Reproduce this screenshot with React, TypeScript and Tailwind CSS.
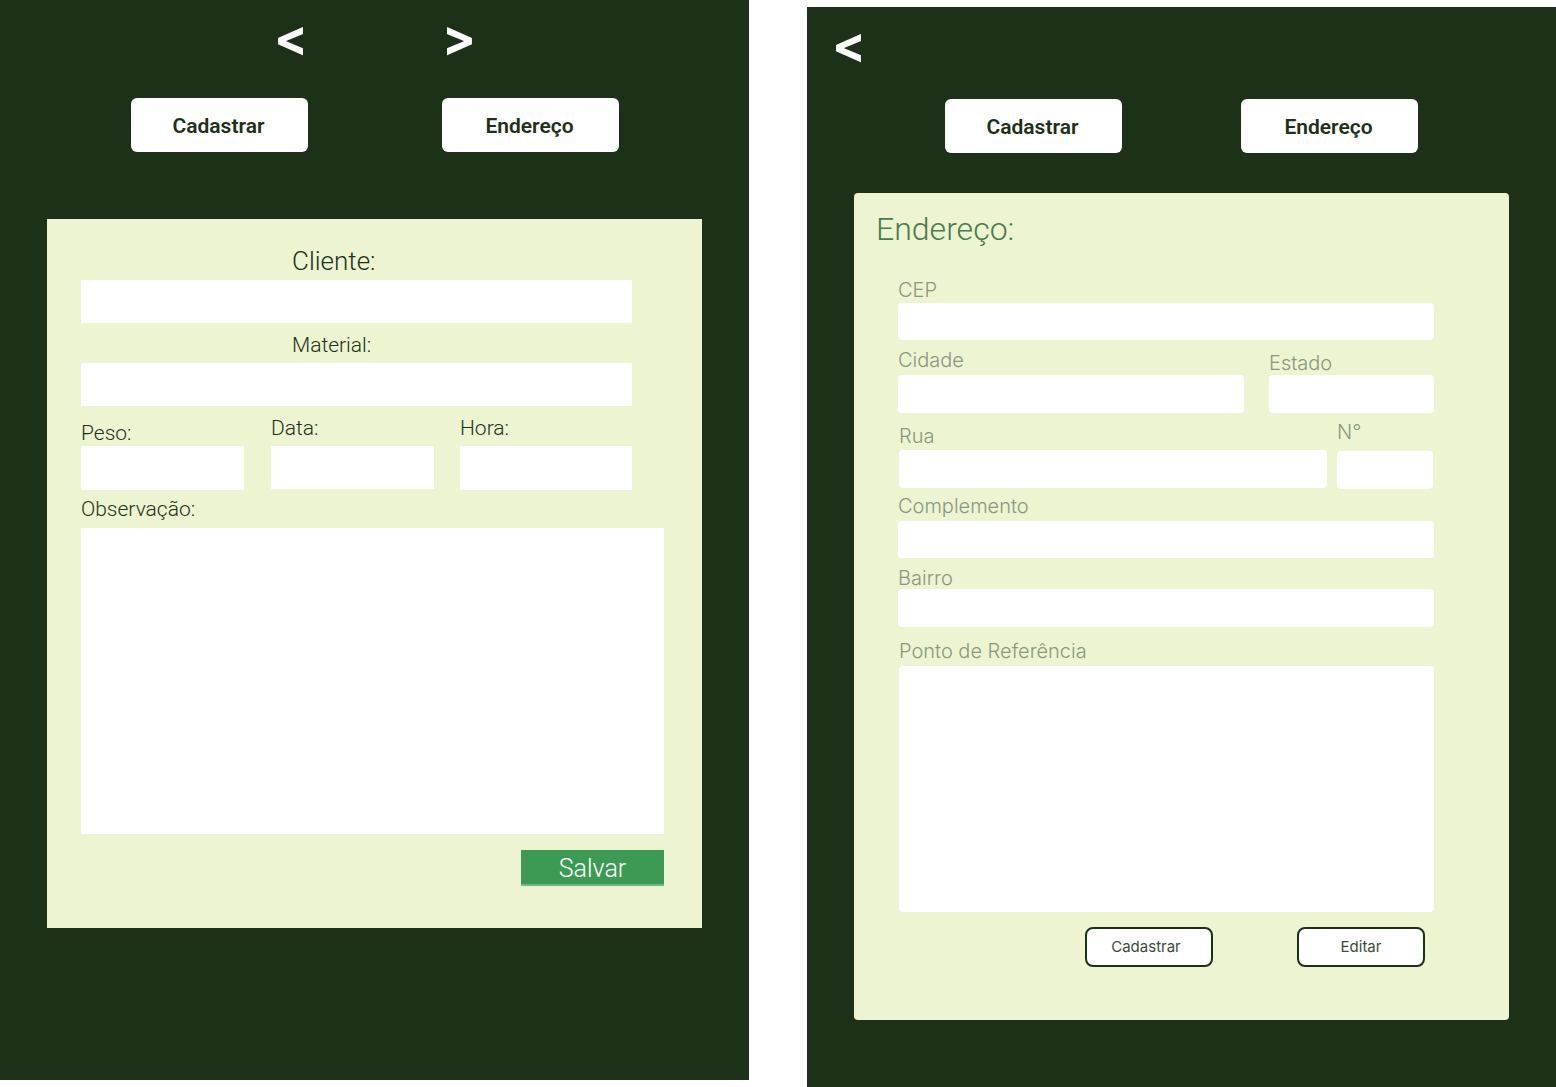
import React from "react"

const roboto = { fontFamily: "Roboto, 'Liberation Sans', sans-serif" }
const inter = { fontFamily: "Inter, 'Liberation Sans', sans-serif" }

function TopButtons({ gap }: { gap: string }) {
  return (
    <div className={`flex ${gap}`}>
      {["Cadastrar", "Endereço"].map((label) => (
        <button
          key={label}
          className="flex h-[54px] w-[177px] items-center justify-center rounded-[6px] bg-white pr-[2px] pt-[3px] text-[21px] font-semibold text-[#1d3018]"
          style={roboto}
        >
          {label}
        </button>
      ))}
    </div>
  )
}

function Arrow({ dir }: { dir: "left" | "right" }) {
  return (
    <span className="block w-[30px] text-[50px] font-bold leading-[50px] text-white" style={inter}>
      {dir === "left" ? "<" : ">"}
    </span>
  )
}

function Box({ className }: { className: string }) {
  return <div className={`bg-white ${className}`} />
}

function PedidoPanel() {
  return (
    <div className="flex h-[1080px] w-[749px] shrink-0 flex-col bg-[#1d3018]" style={roboto}>
      <div className="flex gap-[138px] pl-[274px] pt-[13px]">
        <Arrow dir="left" />
        <Arrow dir="right" />
      </div>
      <div className="mt-[35px] pl-[131px]">
        <TopButtons gap="gap-[134px]" />
      </div>
      <div className="ml-[47px] mt-[67px] h-[709px] w-[655px] bg-[#ecf4d2] pl-[34px] pt-[27px] font-light text-[#1d3018]">
        <p className="pl-[211px] text-[26px] leading-[30px]">Cliente:</p>
        <Box className="mt-[4px] h-[43px] w-[551px]" />
        <p className="mt-[9px] pl-[211px] text-[21px] leading-[26px]">Material:</p>
        <Box className="mt-[5px] h-[43px] w-[551px]" />
        <div className="mt-[10px] flex gap-[27px]">
          <div>
            <p className="mt-[5px] text-[21px] leading-[25px]">Peso:</p>
            <Box className="mt-[0px] h-[44px] w-[163px]" />
          </div>
          <div>
            <p className="text-[21px] leading-[25px]">Data:</p>
            <Box className="mt-[5px] h-[43px] w-[163px]" />
          </div>
          <div className="ml-[-1px]">
            <p className="text-[21px] leading-[25px]">Hora:</p>
            <Box className="mt-[5px] h-[44px] w-[172px]" />
          </div>
        </div>
        <p className="mt-[6px] text-[21px] leading-[26px]">Observação:</p>
        <Box className="mt-[6px] h-[306px] w-[583px]" />
        <div className="mt-[16px] flex w-[583px] justify-end">
          <button className="flex h-[36px] w-[143px] items-center justify-center border-b-2 border-[#6fba82] bg-[#3d9a55] pt-[3px] text-[25px] font-light text-white">
            Salvar
          </button>
        </div>
      </div>
    </div>
  )
}

function Field({ label, className, labelClass = "" }: { label: string; className: string; labelClass?: string }) {
  return (
    <div>
      <p className={`text-[20px] font-light leading-[22px] text-[#8a9880] ${labelClass}`}>{label}</p>
      <div className={`rounded-[4px] bg-white ${className}`} />
    </div>
  )
}

function EnderecoPanel() {
  return (
    <div className="mt-[7px] flex h-[1080px] w-[749px] shrink-0 flex-col bg-[#1d3018]">
      <div className="pl-[25px] pt-[13px]">
        <Arrow dir="left" />
      </div>
      <div className="mt-[29px] pl-[138px]">
        <TopButtons gap="gap-[119px]" />
      </div>
      <div className="ml-[47px] mt-[40px] h-[827px] w-[655px] rounded-[4px] bg-[#ecf4d2] pt-[17px]" style={inter}>
        <p className="pl-[22px] text-[32px] font-light leading-[39px] text-[#4b7a4d]" style={roboto}>
          Endereço:
        </p>
        <div className="mt-[30px] flex flex-col pl-[44px]">
          <Field label="CEP" className="mt-[2px] h-[37px] w-[536px]" />
          <div className="mt-[9px] flex gap-[25px]">
            <Field label="Cidade" className="mt-[4px] h-[38px] w-[346px]" />
            <Field label="Estado" labelClass="mt-[3px]" className="mt-[1px] h-[38px] w-[165px]" />
          </div>
          <div className="mt-[11px] flex gap-[10px] pl-[1px]">
            <Field label="Rua" labelClass="mt-[1px]" className="mt-[3px] h-[38px] w-[428px]" />
            <Field label="N°" labelClass="mt-[-3px]" className="mt-[8px] h-[38px] w-[96px]" />
          </div>
          <div className="mt-[6px]">
            <Field label="Complemento" className="mt-[4px] h-[37px] w-[536px]" />
          </div>
          <div className="mt-[9px]">
            <Field label="Bairro" className="mt-[0px] h-[38px] w-[536px]" />
          </div>
          <div className="mt-[13px] pl-[1px]">
            <Field label="Ponto de Referência" className="mt-[4px] h-[246px] w-[535px]" />
          </div>
        </div>
        <div className="mt-[15px] flex gap-[84px] pl-[231px]">
          <button className="flex h-[40px] w-[128px] items-center justify-center rounded-[8px] border-2 border-[#1d3018] bg-white pr-[6px] text-[15px] text-[#3d4a3a]">
            Cadastrar
          </button>
          <button className="flex h-[40px] w-[128px] items-center justify-center rounded-[8px] border-2 border-[#1d3018] bg-white text-[15px] text-[#3d4a3a]">
            Editar
          </button>
        </div>
      </div>
    </div>
  )
}

export default function App() {
  return (
    <div className="flex h-[1087px] w-[1556px] items-start gap-[58px] overflow-hidden bg-white">
      <PedidoPanel />
      <EnderecoPanel />
    </div>
  )
}
